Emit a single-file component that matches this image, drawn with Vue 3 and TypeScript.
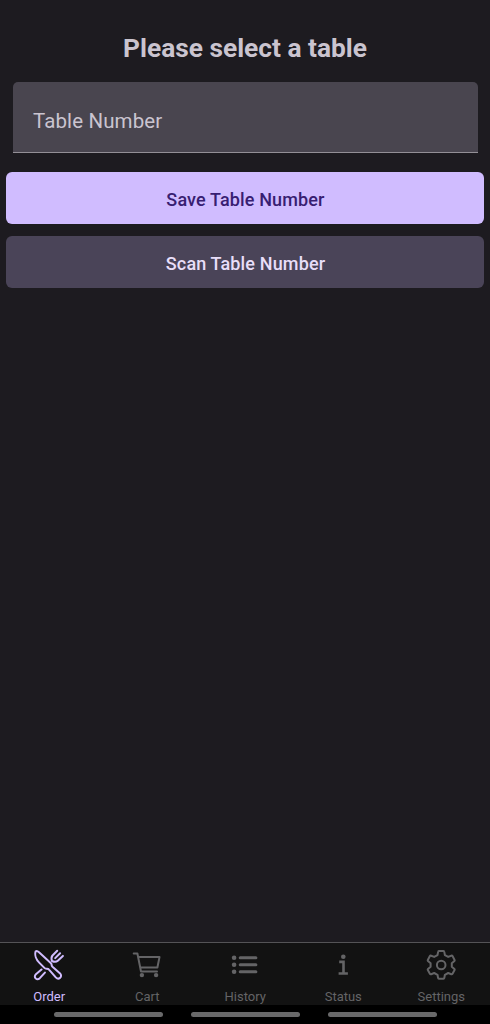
<script setup lang="ts">
import { ref } from 'vue'

interface Tab {
  id: string
  label: string
}

const tabs: Tab[] = [
  { id: 'order', label: 'Order' },
  { id: 'cart', label: 'Cart' },
  { id: 'history', label: 'History' },
  { id: 'status', label: 'Status' },
  { id: 'settings', label: 'Settings' },
]
const active = ref('order')
const tableNumber = ref('')
</script>

<template>
  <div class="screen">
    <main class="content">
      <h1 class="title">Please select a table</h1>
      <input v-model="tableNumber" class="field" type="text" placeholder="Table Number" />
      <button class="btn primary" type="button">Save Table Number</button>
      <button class="btn secondary" type="button">Scan Table Number</button>
    </main>
    <nav class="tabs">
      <button
        v-for="tab in tabs"
        :key="tab.id"
        class="tab"
        :class="{ active: tab.id === active }"
        type="button"
        @click="active = tab.id"
      >
        <svg class="icon" viewBox="0 -0.3 32 32" fill="none" stroke="currentColor" stroke-width="2" stroke-linecap="round" stroke-linejoin="round">
          <g v-if="tab.id === 'order'">
            <path d="M2.7 1.9C1.4 5.5 3.2 10.3 6.2 13.3L11.4 18.6Q12.4 19.6 13.8 19.4Q15.2 19.3 16 20.3L22.8 28.1C25.8 31.1 30 27.2 27.1 24.1L19.5 17.5Q18.5 16.5 18.6 15.3Q18.5 14.3 17.7 13.6L6 2.9Q4 1 2.7 1.9Z" />
            <path d="M8.5 20.2L2.9 25C-0.1 28 3.9 31.6 6.8 28.9L11.9 23.3" />
            <path d="M24.2 1.5L19.5 6.2Q17.8 8.2 18.9 11.7Q22.6 13.4 24.8 11.4L29.9 6.6M27.1 4L22.2 8.8" />
          </g>
          <g v-else-if="tab.id === 'cart'">
            <path d="M2.7 4.2H6.4L10 22.2H26M7.4 7.8H28.5L26.4 18.2H9.4" />
            <circle cx="10.9" cy="25.8" r="2.2" fill="currentColor" stroke="none" />
            <circle cx="25.1" cy="25.8" r="2.2" fill="currentColor" stroke="none" />
          </g>
          <g v-else-if="tab.id === 'history'">
            <path d="M11.2 8.5H26.9M11.2 15.5H26.9M11.2 22.5H26.9" stroke-width="3" />
            <g fill="currentColor" stroke="none">
              <circle cx="5.1" cy="8.5" r="2.3" />
              <circle cx="5.1" cy="15.5" r="2.3" />
              <circle cx="5.1" cy="22.5" r="2.3" />
            </g>
          </g>
          <g v-else-if="tab.id === 'status'">
            <circle cx="16.3" cy="7.4" r="2.3" fill="currentColor" stroke="none" />
            <path d="M13.5 12.6H16.5V24.2M12.9 24.2H19.6" stroke-width="2.6" stroke-linecap="square" stroke-linejoin="miter" />
          </g>
          <g v-else>
            <path d="M13.9 1.8H18.5Q19.2 1.8 19.3 2.6L19.9 5.8L23.2 7.6L26.3 6.4Q27.1 6.1 27.5 6.8L29.6 10.6Q29.9 11.2 29.4 11.7L26.8 13.9V17.5L29.4 19.7Q29.9 20.2 29.6 20.8L27.5 24.5Q27.1 25.2 26.3 24.9L23.2 23.7L19.9 25.5L19.3 28.7Q19.2 29.5 18.5 29.5H13.9Q13.2 29.5 13.1 28.7L12.5 25.5L9.2 23.7L6.1 24.9Q5.3 25.2 4.9 24.5L2.8 20.8Q2.5 20.2 3 19.7L5.6 17.5V13.9L3 11.7Q2.5 11.2 2.8 10.6L4.9 6.8Q5.3 6.1 6.1 6.4L9.2 7.6L12.5 5.8L13.1 2.6Q13.2 1.8 13.9 1.8Z" />
            <circle cx="16.2" cy="15.7" r="4.3" />
          </g>
        </svg>
        <span class="label">{{ tab.label }}</span>
      </button>
    </nav>
    <footer class="system-bar"><i v-for="n in 3" :key="n" class="pill"></i></footer>
  </div>
</template>

<style>
body {
  margin: 0;
  background: #1d1b20;
}
</style>

<style scoped>
.screen {
  display: flex;
  flex-direction: column;
  height: 1024px;
  overflow: hidden;
  background: #1d1b20;
  font-family: Roboto, sans-serif;
}
.content {
  flex: 1;
  display: flex;
  flex-direction: column;
  padding: 32px 6px 0;
}
.title {
  margin: 0 0 18px;
  font-size: 26.3px;
  line-height: 32px;
  font-weight: 700;
  text-align: center;
  color: #cac4cf;
}
.field {
  box-sizing: border-box;
  height: 71px;
  margin: 0 6.5px 19px;
  padding: 7px 20.5px 0;
  border: 0;
  border-bottom: 1px solid #938f96;
  border-radius: 5px 5px 0 0;
  outline: none;
  background: #49454f;
  color: #cac4d0;
  font: 400 20.5px Roboto, sans-serif;
  letter-spacing: 0.12px;
}
.field::placeholder {
  color: #cac4d0;
  opacity: 1;
}
.btn {
  height: 52px;
  margin: 0 0 12px;
  padding: 2px 0 0 1px;
  border: 0;
  border-radius: 6px;
  font: 500 18px Roboto, sans-serif;
  letter-spacing: 0.14px;
}
.primary {
  background: #d0bcff;
  color: #381e72;
}
.secondary {
  background: #4a4458;
  color: #e8def8;
}
.tabs {
  box-sizing: border-box;
  display: flex;
  height: 63px;
  border-top: 1px solid #545356;
  background: #121212;
}
.tab {
  flex: 1;
  display: flex;
  flex-direction: column;
  align-items: center;
  justify-content: flex-start;
  min-width: 0;
  padding: 6px 0 0;
  border: 0;
  background: none;
  color: #646466;
}
.tab.active {
  color: #d0bcff;
}
.icon {
  display: block;
  flex: none;
  width: 32px;
  height: 32px;
}
.label {
  flex: none;
  margin-top: 7px;
  padding-left: 0.5px;
  font: 400 13px/17px Roboto, sans-serif;
}
.system-bar {
  display: flex;
  justify-content: center;
  gap: 28px;
  height: 19px;
  box-sizing: border-box;
  padding: 7px 0 0;
  background: #000;
}
.pill {
  width: 109px;
  height: 5px;
  border-radius: 3px;
  background: #69696a;
}
</style>
